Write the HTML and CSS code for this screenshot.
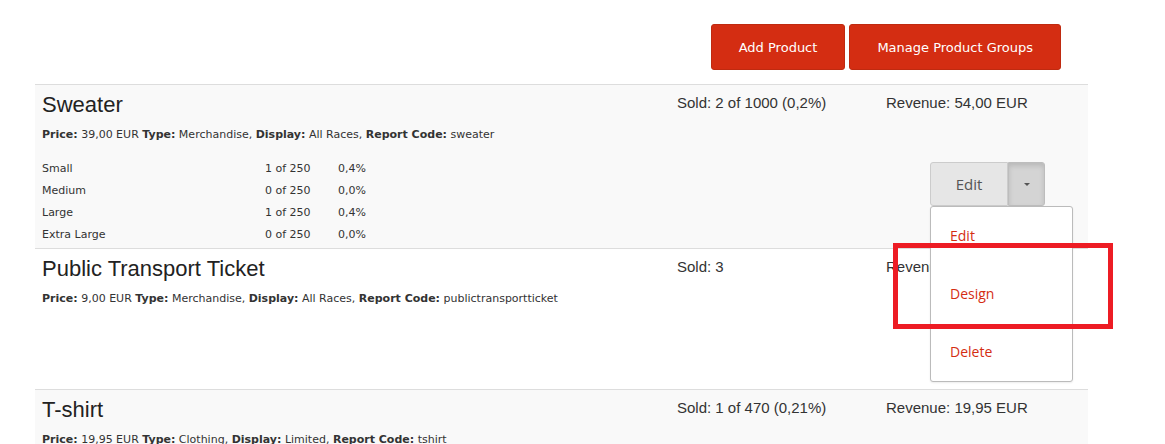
FILE: index.html
```html
<!DOCTYPE html>
<html lang="en">
<head>
  <meta charset="UTF-8" />
  <title>Products</title>
  <link rel="stylesheet" href="styles.css">
</head>
<body>
  <div class="products">
    <div class="products-toolbar">
      <button class="btn-primary">Add Product</button>
      <button class="btn-primary">Manage Product Groups</button>
    </div>

    <div class="product-list">
      <div class="product-row">
        <div class="product-main">
          <h3 class="product-name">Sweater</h3>
          <p class="product-info"><b>Price:</b> 39,00 EUR <b>Type:</b> Merchandise, <b>Display:</b> All Races, <b>Report Code:</b> sweater</p>
          <table class="variants">
            <tr><td>Small</td><td>1 of 250</td><td>0,4%</td></tr>
            <tr><td>Medium</td><td>0 of 250</td><td>0,0%</td></tr>
            <tr><td>Large</td><td>1 of 250</td><td>0,4%</td></tr>
            <tr><td>Extra Large</td><td>0 of 250</td><td>0,0%</td></tr>
          </table>
        </div>
        <div class="product-sold">Sold: 2 of 1000 (0,2%)</div>
        <div class="product-revenue">
          <div class="revenue-text">Revenue: 54,00 EUR</div>
          <div class="btn-group open">
            <button class="btn-edit">Edit</button>
            <button class="btn-toggle"><span class="caret"></span></button>
            <ul class="dropdown-menu">
              <li><a href="#">Edit</a></li>
              <li><a href="#">Design</a></li>
              <li><a href="#">Delete</a></li>
            </ul>
          </div>
        </div>
      </div>

      <div class="product-row">
        <div class="product-main">
          <h3 class="product-name">Public Transport Ticket</h3>
          <p class="product-info"><b>Price:</b> 9,00 EUR <b>Type:</b> Merchandise, <b>Display:</b> All Races, <b>Report Code:</b> publictransportticket</p>
        </div>
        <div class="product-sold">Sold: 3</div>
        <div class="product-revenue">
          <div class="revenue-text">Revenue: 27,00 EUR</div>
        </div>
      </div>

      <div class="product-row">
        <div class="product-main">
          <h3 class="product-name">T-shirt</h3>
          <p class="product-info"><b>Price:</b> 19,95 EUR <b>Type:</b> Clothing, <b>Display:</b> Limited, <b>Report Code:</b> tshirt</p>
          <table class="variants">
            <tr><td>Small</td><td>0 of 150</td><td>0,0%</td></tr>
            <tr><td>Medium</td><td>1 of 170</td><td>0,59%</td></tr>
            <tr><td>Large</td><td>0 of 150</td><td>0,0%</td></tr>
          </table>
        </div>
        <div class="product-sold">Sold: 1 of 470 (0,21%)</div>
        <div class="product-revenue">
          <div class="revenue-text">Revenue: 19,95 EUR</div>
          <div class="btn-group">
            <button class="btn-edit">Edit</button>
            <button class="btn-toggle"><span class="caret"></span></button>
          </div>
        </div>
      </div>
    </div>
  </div>

  <!-- screenshot annotation -->
  <div class="highlight-box"></div>
</body>
</html>
```

FILE: styles.css
```css
:root {
  --brand: #d42d12;
  --brand-dark: #bf2a10;
  --row-border: #dddddd;
  --stripe: #f9f9f9;
  --text: #333333;
}
* { box-sizing: border-box; }
body {
  margin: 0;
  background: #fff;
  font-family: "Liberation Sans", Arial, sans-serif;
  color: var(--text);
}
.products {
  margin-left: 35px;
  width: 1053px;
}
.products-toolbar {
  display: flex;
  justify-content: flex-end;
  gap: 4px;
  padding: 24px 27px 14px 0;
}
.btn-primary {
  height: 46px;
  padding: 0 27px;
  background: var(--brand);
  border: 1px solid var(--brand-dark);
  border-radius: 3px;
  color: #fff;
  font-family: "DejaVu Sans", Verdana, sans-serif;
  font-size: 13px;
  cursor: pointer;
}
.product-row {
  display: grid;
  grid-template-columns: 635px 209px 1fr;
  align-items: start;
  min-height: 141px;
  border-top: 1px solid var(--row-border);
  padding: 8px 0 0 7px;
}
.product-row:nth-child(odd) { background: var(--stripe); }
.product-name {
  margin: 0;
  font-size: 22px;
  line-height: 24px;
  font-weight: 400;
  color: #222;
}
.product-info {
  margin: 10px 0 0;
  font-family: "DejaVu Sans", Verdana, sans-serif;
  font-size: 11px;
  line-height: 16px;
}
.variants {
  margin: 14px 0 3px;
  border-collapse: collapse;
  font-family: "DejaVu Sans", Verdana, sans-serif;
  font-size: 11px;
}
.variants td {
  height: 22px;
  padding: 0;
  white-space: nowrap;
}
.variants tr:first-child td { padding-top: 1px; }
.variants td:first-child { width: 223px; }
.variants td:nth-child(2) { width: 73px; }
.product-sold,
.revenue-text {
  font-size: 15px;
  line-height: 18px;
}
.product-sold { padding-top: 1px; }
.product-revenue { padding-top: 1px; }
.btn-group {
  position: relative;
  display: inline-flex;
  margin: 50px 0 19px 44px;
}
.btn-group button {
  height: 44px;
  border: 1px solid #cccccc;
  font-family: "Open Sans", sans-serif;
  font-size: 15px;
  color: #555;
  cursor: pointer;
}
.btn-edit {
  width: 78px;
  padding: 0;
  background: #e6e6e6;
  border-radius: 3px 0 0 3px;
  border-right: none;
}
.btn-toggle {
  width: 37px;
  padding: 0;
  background: #d4d4d4;
  border-color: #bdbdbd !important;
  border-radius: 0 3px 3px 0;
  box-shadow: inset 0 3px 5px rgba(0,0,0,0.125);
  display: flex;
  align-items: center;
  justify-content: center;
}
.caret {
  width: 0;
  height: 0;
  border-top: 3px solid #555;
  border-left: 3px solid transparent;
  border-right: 3px solid transparent;
}
.dropdown-menu {
  position: absolute;
  top: 100%;
  left: 0;
  z-index: 10;
  width: 143px;
  margin: 0;
  padding: 0;
  list-style: none;
  background: #fff;
  border: 1px solid #bbbbbb;
  border-radius: 3px;
  box-shadow: 0 1px 2px rgba(0,0,0,0.08);
}
.dropdown-menu a {
  display: block;
  height: 58px;
  line-height: 57px;
  padding-left: 19px;
  font-family: "Open Sans", sans-serif;
  font-size: 14px;
  color: var(--brand);
  text-decoration: none;
}
.highlight-box {
  position: absolute;
  left: 893px;
  top: 243px;
  width: 220px;
  height: 86px;
  border: 5px solid #ed1c24;
  z-index: 20;
}
```
